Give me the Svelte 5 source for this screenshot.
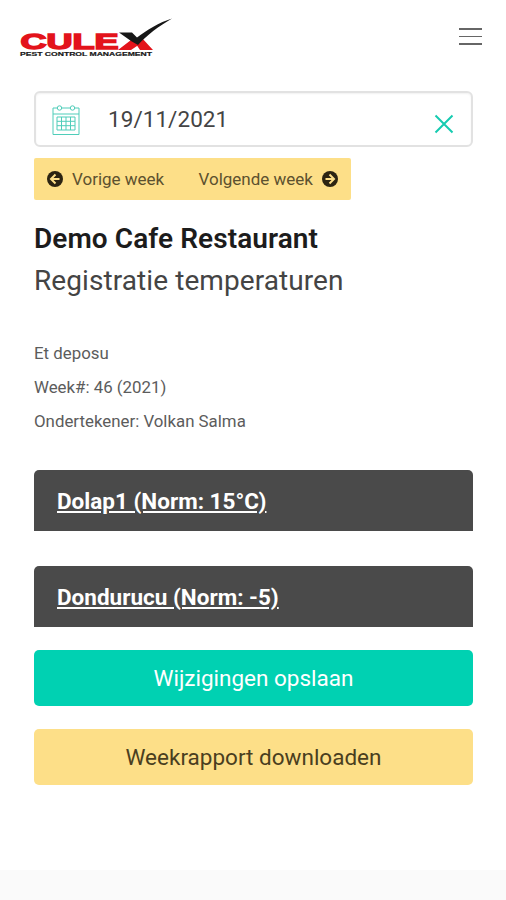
<script>
  let date = $state("19/11/2021");

  const details = ["Et deposu", "Week#: 46 (2021)", "Ondertekener: Volkan Salma"];
  const devices = [
    { name: "Dolap1", norm: "15°C" },
    { name: "Dondurucu", norm: "-5" },
  ];
</script>

<div class="page">
  <header class="navbar">
    <svg class="logo" viewBox="0 0 154 42" role="img" aria-label="Culex">
      <text class="wordmark" x="0.5" y="33" textLength="98" lengthAdjust="spacingAndGlyphs">CULE</text>
      <path fill="#e3131b" d="M98 34 111 24 120 28 111 34ZM114 25 121 21 133 34H120Z" />
      <path fill="#171717" d="M99 16.5H112L117 21.5C127 14 139 6.5 152 2.5 139 10 127 19 118 29L111 25Z" />
      <text class="tagline" x="0" y="40" textLength="132" lengthAdjust="spacingAndGlyphs">PEST CONTROL MANAGEMENT</text>
    </svg>
    <button class="burger" type="button" aria-label="Menu">
      <span></span>
      <span></span>
      <span></span>
    </button>
  </header>

  <main>
    <div class="datepicker">
      <svg class="calendar" viewBox="0 0 28 31" fill="none" stroke="#4fcdb9">
        <path d="M5 3H1V29.5H27V3H23M10 3H18M1 9H27" />
        <circle cx="7.5" cy="3" r="2.2" />
        <circle cx="20.5" cy="3" r="2.2" />
        <path d="M5 12H23V25H5ZM5 16.3H23M5 20.7H23M9.5 12V25M14 12V25M18.5 12V25" />
      </svg>
      <span class="date">{date}</span>
      <button class="clear" type="button" aria-label="Clear" onclick={() => (date = "")}>
        <svg viewBox="0 0 20 20" fill="none" stroke="#16cbb0" stroke-width="2">
          <path d="M1.5 1.5 18.5 18.5M18.5 1.5 1.5 18.5" />
        </svg>
      </button>
    </div>

    <div class="weeks">
      <button type="button">
        <svg viewBox="0 0 16 16">
          <circle cx="8" cy="8" r="8" />
          <path d="M8.5 3.5 4 8 8.5 12.5M4.5 8H12.5" />
        </svg>
        <span>Vorige week</span>
      </button>
      <button type="button">
        <span>Volgende week</span>
        <svg viewBox="0 0 16 16">
          <circle cx="8" cy="8" r="8" />
          <path d="M7.5 3.5 12 8 7.5 12.5M11.5 8H3.5" />
        </svg>
      </button>
    </div>

    <h1>Demo Cafe Restaurant</h1>
    <h2>Registratie temperaturen</h2>

    <div class="details">
      {#each details as line}
        <p>{line}</p>
      {/each}
    </div>

    {#each devices as device}
      <div class="device">
        <a href="#{device.name}">{device.name} (Norm: {device.norm})</a>
      </div>
    {/each}

    <button class="action save" type="button">Wijzigingen opslaan</button>
    <button class="action download" type="button">Weekrapport downloaden</button>
  </main>

  <footer></footer>
</div>

<style>
  :global(body) {
    margin: 0;
    background: #fff;
  }

  .page {
    display: flex;
    flex-direction: column;
    height: 900px;
    overflow: hidden;
    color: #363636;
    font-family: Roboto, sans-serif;
  }

  button {
    border: 0;
    padding: 0;
    background: none;
    color: inherit;
    font: inherit;
  }

  svg {
    display: block;
    overflow: visible;
  }

  .navbar {
    display: flex;
    justify-content: space-between;
    align-items: flex-start;
    height: 75px;
    padding: 16px 24px 0 20px;
    box-sizing: border-box;
  }

  .logo {
    width: 154px;
    height: 42px;
  }

  .wordmark {
    fill: #e3131b;
    stroke: #e3131b;
    stroke-width: 1.5px;
    font: bold 22.5px "Liberation Sans", sans-serif;
  }

  .tagline {
    fill: #171717;
    stroke: #171717;
    stroke-width: 0.2px;
    font: bold 6px "Liberation Sans", sans-serif;
  }

  .burger {
    display: grid;
    gap: 6px;
    margin-top: 12px;
  }

  .burger span {
    width: 23px;
    height: 1.5px;
    background: #666;
  }

  main {
    flex: 1;
    padding: 16px 33px 0 34px;
  }

  .datepicker {
    display: flex;
    align-items: center;
    height: 56px;
    padding: 0 17px 0 19px;
    box-sizing: border-box;
    border: 2px solid #e2e2e2;
    border-radius: 6px;
    box-shadow: inset 0 1px 2px rgba(10, 10, 10, 0.06);
  }

  .calendar {
    width: 28px;
    height: 31px;
    margin: 2px 28px 0 -3px;
  }

  .date {
    flex: 1;
    color: #444;
    font-size: 22.5px;
    letter-spacing: 0.05px;
  }

  .clear svg {
    width: 20px;
    height: 20px;
    margin-top: 9px;
  }

  .weeks {
    display: flex;
    justify-content: space-between;
    width: 317px;
    height: 42px;
    margin-top: 11px;
    padding: 0 13px;
    box-sizing: border-box;
    border-radius: 2px;
    background: #fddf88;
    color: #5c512f;
    font-size: 17px;
  }

  .weeks button {
    display: flex;
    align-items: center;
    gap: 9px;
  }

  .weeks svg {
    width: 16px;
    height: 16px;
  }

  .weeks circle {
    fill: #2c2412;
  }

  .weeks path {
    fill: none;
    stroke: #fddf88;
    stroke-width: 2;
  }

  h1,
  h2 {
    margin: 0;
    font-size: 28px;
    line-height: 42px;
    letter-spacing: 0.08px;
    white-space: nowrap;
  }

  h1 {
    margin-top: 18px;
    color: #1c1c1c;
    font-weight: 600;
  }

  h2 {
    color: #444;
    font-weight: 400;
  }

  .details {
    margin: 34px 0 32px;
    color: #5c5c5c;
    font-size: 16.85px;
    line-height: 34px;
  }

  .details p {
    margin: 0;
  }

  .device {
    display: flex;
    align-items: center;
    height: 61px;
    margin-bottom: 35px;
    padding: 0 23px;
    border-radius: 5px 5px 0 0;
    background: #4a4a4a;
  }

  .device a {
    color: #fff;
    font-size: 22.5px;
    font-weight: 700;
    text-decoration: underline;
  }

  .action {
    display: block;
    width: 100%;
    height: 56px;
    border-radius: 5px;
    font-size: 22.5px;
  }

  .save {
    margin-top: -12px;
    background: #00d1b2;
    color: #fff;
  }

  .download {
    margin-top: 23px;
    background: #fddf88;
    color: #4a3e20;
  }

  footer {
    height: 30px;
    background: #fafafa;
  }
</style>
